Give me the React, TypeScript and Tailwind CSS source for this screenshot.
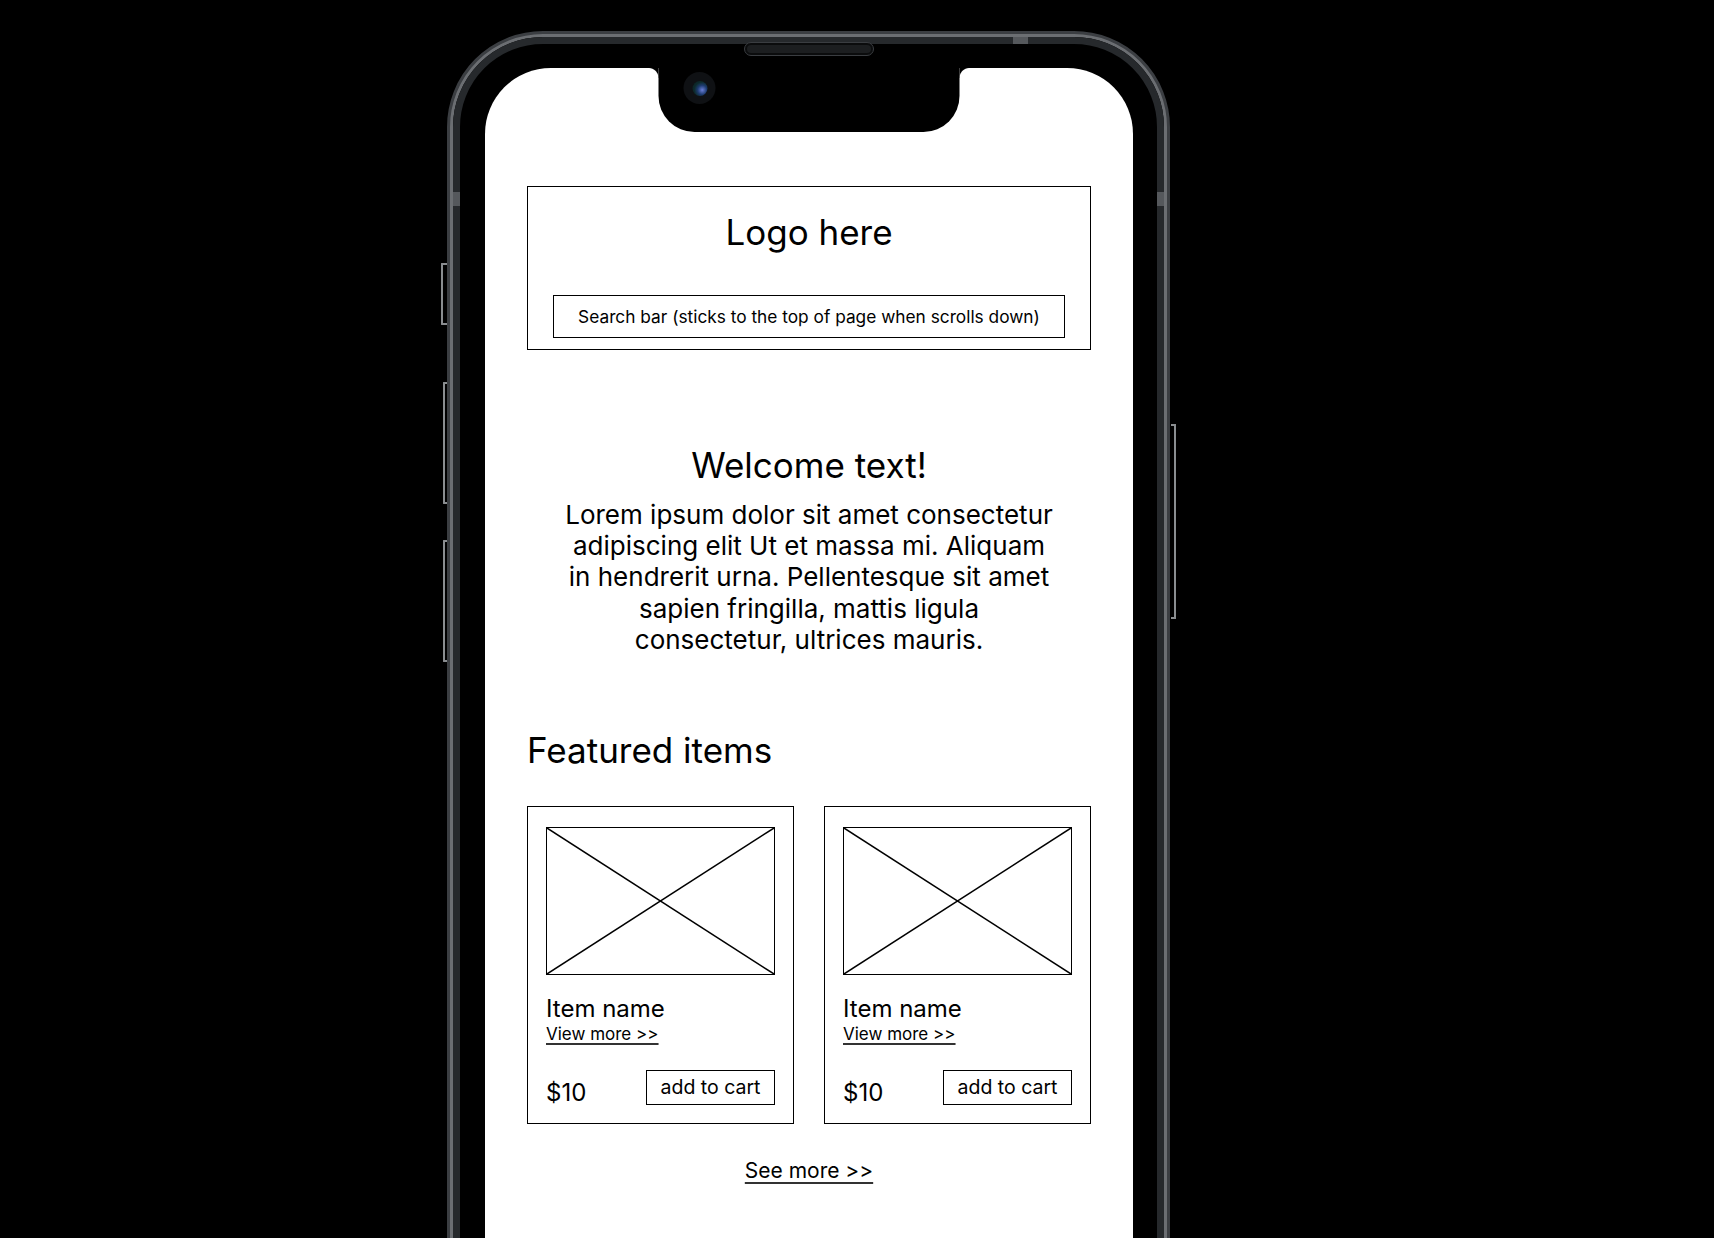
const font = "font-['Inter','Noto_Sans',sans-serif]";

function PlaceholderImage() {
  return (
    <div className="w-full h-[148px] border-[1.5px] border-black">
      <svg width="100%" height="100%" viewBox="0 0 100 100" preserveAspectRatio="none">
        <line x1="0" y1="0" x2="100" y2="100" stroke="black" strokeWidth="1.5" vectorEffect="non-scaling-stroke" />
        <line x1="100" y1="0" x2="0" y2="100" stroke="black" strokeWidth="1.5" vectorEffect="non-scaling-stroke" />
      </svg>
    </div>
  );
}

function ItemCard() {
  return (
    <div className="w-[267px] h-[318px] border-[1.5px] border-black px-[18px] pt-[20px] flex flex-col">
      <PlaceholderImage />
      <div className="mt-[19px] text-[24px] leading-[30px] text-black">Item name</div>
      <div className="text-[17px] leading-[20px] text-black underline underline-offset-[3px] decoration-[1.5px] decoration-[#333] w-max">
        View more &gt;&gt;
      </div>
      <div className="mt-[26px] flex justify-between items-end">
        <div className="text-[24px] leading-[30px] text-black -mb-[3px]">$10</div>
        <div className="w-[129px] h-[35px] border-[1.5px] border-black flex items-center justify-center text-[19.5px] text-black">
          add to cart
        </div>
      </div>
    </div>
  );
}

function SideButton({ className }: { className: string }) {
  return (
    <div className={"absolute border-l-[2px] border-y-[2px] border-[#8a8d90] rounded-l-[1px] " + className} />
  );
}

export default function App() {
  return (
    <div className={"w-[1714px] h-[1238px] bg-black overflow-hidden pl-[447px] pt-[31px] " + font}>
      <div className="relative w-[723px] h-[1300px]">
        {/* side buttons */}
        <SideButton className="left-[-6px] top-[232px] h-[62px] w-[6px]" />
        <SideButton className="left-[-4px] top-[351px] h-[122px] w-[4px]" />
        <SideButton className="left-[-4px] top-[509px] h-[122px] w-[4px]" />
        <div className="absolute right-[-6px] top-[393px] h-[195px] w-[5px] border-r-[2px] border-y-[2px] border-[#8a8d90]" />

        {/* frame */}
        <div className="w-full h-full rounded-t-[96px] border-[3px] border-[#3b3e42] bg-[#3b3e42]">
          <div className="w-full h-full rounded-t-[93px] border-[3px] border-[#6b6e72] bg-black">
            <div className="w-full h-full rounded-t-[90px] border-[7px] border-[#26292c] bg-black pl-[25px] pt-[24px] relative">
              {/* antenna bands */}
              <div className="absolute top-[-7px] left-[553px] w-[15px] h-[7px] bg-[#55585c]" />
              <div className="absolute left-[-7px] top-[148px] w-[7px] h-[14px] bg-[#55585c]" />
              <div className="absolute right-[-7px] top-[148px] w-[7px] h-[14px] bg-[#55585c]" />
              {/* speaker */}
              <div className="absolute left-[284px] top-[-2px] w-[130px] h-[14px] rounded-full border border-[#3a3d41] bg-[#0b0c0d] p-[2px]">
                <div className="w-full h-full rounded-full bg-[#1c1e20]" />
              </div>

              {/* screen */}
              <div className="relative w-[648px] h-[1200px] bg-white rounded-t-[66px]">
                {/* notch */}
                <div className="absolute left-1/2 -translate-x-1/2 top-0 flex">
                  <div className="w-[10px] h-[10px] bg-[radial-gradient(circle_at_0%_100%,#ffffff_9.5px,#000000_10.5px)]" />
                  <div className="relative w-[301px] h-[64px] bg-black rounded-b-[36px]">
                    <div className="absolute left-[25px] top-[4px] w-[32px] h-[32px] rounded-full bg-[#0f1114] flex items-center justify-center">
                      <div className="w-[15px] h-[15px] rounded-full bg-[radial-gradient(circle_at_65%_60%,#6a7fd8_0%,#1d3a6e_35%,#0d2b2c_60%,#0a1a1c_100%)]" />
                    </div>
                  </div>
                  <div className="w-[10px] h-[10px] bg-[radial-gradient(circle_at_100%_100%,#ffffff_9.5px,#000000_10.5px)]" />
                </div>

                {/* content */}
                <div className="w-[564px] mx-auto pt-[118px] flex flex-col">
                  <div className="border-[1.5px] border-black flex flex-col items-center pt-[23px] pb-[11px] px-[25px]">
                    <div className="text-[35px] leading-[44px] text-black">Logo here</div>
                    <div className="mt-[41px] w-full h-[43px] border-[1.5px] border-black flex items-center justify-center text-[17.3px] text-black">
                      Search bar (sticks to the top of page when scrolls down)
                    </div>
                  </div>

                  <div className="mt-[95px] text-center text-[35px] leading-[40px] text-black">Welcome text!</div>
                  <p className="mt-[14px] mx-auto w-[492px] text-center text-[26px] leading-[31.2px] text-black">
                    Lorem ipsum dolor sit amet consectetur adipiscing elit Ut et massa mi. Aliquam in hendrerit urna. Pellentesque sit amet sapien fringilla, mattis ligula consectetur, ultrices mauris.
                  </p>

                  <div className="mt-[75px] text-[35px] leading-[40px] text-black">Featured items</div>
                  <div className="mt-[36px] flex justify-between">
                    <ItemCard />
                    <ItemCard />
                  </div>

                  <div className="mt-[35px] text-center">
                    <span className="text-[21px] leading-[24px] text-black underline underline-offset-[4px] decoration-[2px] decoration-[#333]">
                      See more &gt;&gt;
                    </span>
                  </div>
                </div>
              </div>
            </div>
          </div>
        </div>
      </div>
    </div>
  );
}
